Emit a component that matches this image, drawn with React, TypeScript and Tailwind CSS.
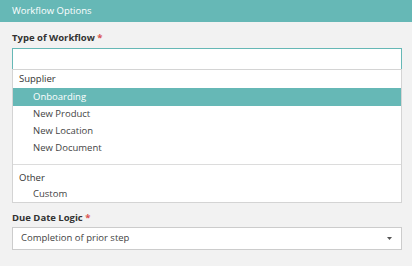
import React from "react";

export default function App() {
  const items = ["New Product", "New Location", "New Document"];
  return (
    <div
      className="w-[412px] h-[266px] bg-[#f2f2f2] overflow-hidden text-[#333]"
      style={{ fontFamily: '"Open Sans", sans-serif' }}
    >
      <div className="h-[22px] bg-[#66b8b6] flex items-center pl-[12px] text-white text-[9.5px]">
        Workflow Options
      </div>
      <div className="pl-[12px] pr-[10px]">
        <div className="mt-[10px] h-[12px] leading-[12px] text-[9.5px] font-bold text-[#333]">
          Type of Workflow <span className="text-[#d9534f]">*</span>
        </div>
        <div className="mt-[4px] relative">
          <div className="h-[21px] bg-white border border-b-0 border-[#66b8b6]" />
          <div className="bg-white border border-[#d4d4d4] text-[9.5px]">
            <div className="h-[18px] flex items-center pl-[6px] text-[#333]">Supplier</div>
            <div className="h-[18px] flex items-center pl-[20px] bg-[#66b8b6] text-white">Onboarding</div>
            {items.map((t) => (
              <div key={t} className="h-[17px] flex items-center pl-[20px] text-[#444]">
                {t}
              </div>
            ))}
            <div className="h-[7px]" />
            <div className="border-t border-[#dcdcdc]" />
            <div className="h-[4px]" />
            <div className="h-[18px] flex items-center pl-[6px] text-[#333]">Other</div>
            <div className="h-[15px] flex items-center pl-[20px] text-[#444]">Custom</div>
          </div>
        </div>
        <div className="mt-[9px] h-[12px] leading-[12px] text-[9.5px] font-bold text-[#333]">
          Due Date Logic <span className="text-[#d9534f]">*</span>
        </div>
        <div className="mt-[3px] h-[23px] bg-white border border-[#cccccc] flex items-center justify-between pl-[8px] pr-[9px] text-[9.5px] text-[#444]">
          <span>Completion of prior step</span>
          <svg width="5" height="3" viewBox="0 0 5 3">
            <path d="M0 0 L5 0 L2.5 3 Z" fill="#555" />
          </svg>
        </div>
      </div>
    </div>
  );
}
